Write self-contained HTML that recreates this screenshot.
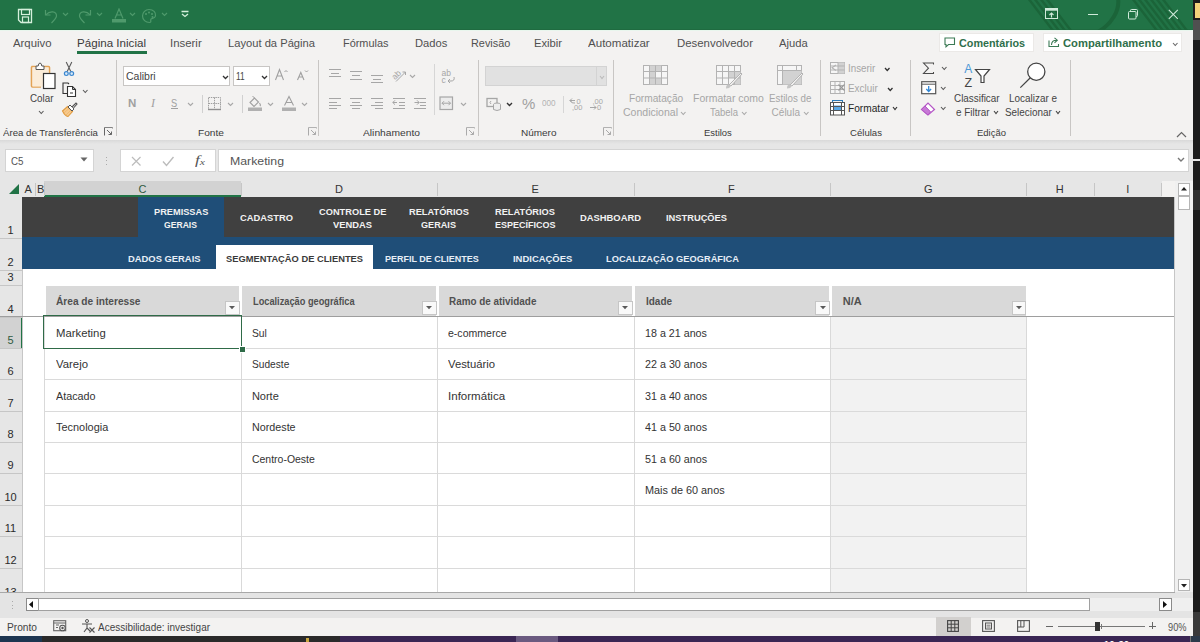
<!DOCTYPE html>
<html><head><meta charset="utf-8"><style>
html,body{margin:0;padding:0;width:1200px;height:642px;overflow:hidden;background:#f3f2f1;font-family:'Liberation Sans', sans-serif;}
</style></head><body>
<div style="position:relative;width:1200px;height:642px;overflow:hidden">
<div style="position:absolute;left:0px;top:0px;width:1200px;height:30px;background:#217346;"></div>
<div style="position:absolute;left:0px;top:30px;width:1193px;height:110px;background:#f3f2f1;"></div>
<div style="position:absolute;left:0px;top:29px;width:1193px;height:1px;background:#1f6b40;"></div>
<div style="position:absolute;left:0px;top:30px;width:1193px;height:1px;background:#e8f6ed;"></div>
<div style="position:absolute;left:77px;top:51.3px;width:70px;height:2.5px;background:#217346;"></div>
<div style="position:absolute;left:938.5px;top:32.5px;width:95.5px;height:19.5px;box-sizing:border-box;border:1px solid #ebe9e7;background:#fff;"></div>
<div style="position:absolute;left:1043px;top:32.5px;width:139px;height:19.5px;box-sizing:border-box;border:1px solid #ebe9e7;background:#fff;"></div>
<div style="position:absolute;left:115.5px;top:60px;width:1px;height:76px;background:#c8c6c4;"></div>
<div style="position:absolute;left:318px;top:60px;width:1px;height:76px;background:#c8c6c4;"></div>
<div style="position:absolute;left:477.5px;top:60px;width:1px;height:76px;background:#c8c6c4;"></div>
<div style="position:absolute;left:613px;top:60px;width:1px;height:76px;background:#c8c6c4;"></div>
<div style="position:absolute;left:820px;top:60px;width:1px;height:76px;background:#c8c6c4;"></div>
<div style="position:absolute;left:910px;top:60px;width:1px;height:76px;background:#c8c6c4;"></div>
<div style="position:absolute;left:1070px;top:60px;width:1px;height:76px;background:#c8c6c4;"></div>
<div style="position:absolute;left:0px;top:140px;width:1193px;height:4px;background:linear-gradient(#d9d9d9,#e6e6e6);"></div>
<div style="position:absolute;left:0px;top:144px;width:1193px;height:37px;background:#e6e6e6;"></div>
<div style="position:absolute;left:4.5px;top:149px;width:89px;height:22.5px;box-sizing:border-box;border:1px solid #d4d4d4;background:#fff;"></div>
<div style="position:absolute;left:120px;top:149px;width:96px;height:22.5px;box-sizing:border-box;border:1px solid #d4d4d4;background:#fff;"></div>
<div style="position:absolute;left:218px;top:149px;width:970.5px;height:22.5px;box-sizing:border-box;border:1px solid #d4d4d4;background:#fff;"></div>
<div style="position:absolute;left:0px;top:181px;width:1162px;height:16px;background:#e6e6e6;"></div>
<div style="position:absolute;left:44px;top:181px;width:197px;height:14.5px;background:#d2d2d2;"></div>
<div style="position:absolute;left:44px;top:195px;width:197px;height:2px;background:#217346;"></div>
<div style="position:absolute;left:35px;top:183px;width:1px;height:13px;background:#c6c6c6;"></div>
<div style="position:absolute;left:44px;top:183px;width:1px;height:13px;background:#c6c6c6;"></div>
<div style="position:absolute;left:241px;top:183px;width:1px;height:13px;background:#c6c6c6;"></div>
<div style="position:absolute;left:437px;top:183px;width:1px;height:13px;background:#c6c6c6;"></div>
<div style="position:absolute;left:634px;top:183px;width:1px;height:13px;background:#c6c6c6;"></div>
<div style="position:absolute;left:830px;top:183px;width:1px;height:13px;background:#c6c6c6;"></div>
<div style="position:absolute;left:1026px;top:183px;width:1px;height:13px;background:#c6c6c6;"></div>
<div style="position:absolute;left:1093.5px;top:183px;width:1px;height:13px;background:#c6c6c6;"></div>
<div style="position:absolute;left:1161px;top:183px;width:1px;height:13px;background:#c6c6c6;"></div>
<svg style="position:absolute;left:8px;top:183px;" width="12" height="12" viewBox="0 0 12 12"><polygon points="11,1 11,11 1,11" fill="#217346"/></svg>
<div style="position:absolute;left:0px;top:197px;width:22px;height:395px;background:#e6e6e6;"></div>
<div style="position:absolute;left:0;top:197px;width:22px;height:394.5px;overflow:hidden">
<div style="position:absolute;left:0px;top:120px;width:22px;height:31px;background:#d2d2d2;"></div>
<div style="position:absolute;left:20.5px;top:120px;width:2px;height:31px;background:#217346;"></div>
<div style="position:absolute;left:0px;top:40.5px;width:22px;height:1px;background:#c6c6c6;"></div>
<div style="position:absolute;left:0;top:26.5px;width:21px;height:13px;line-height:13px;font-size:11px;font-family:Liberation Sans,sans-serif;color:#2a2a2a;text-align:center">1</div>
<div style="position:absolute;left:0px;top:72.5px;width:22px;height:1px;background:#c6c6c6;"></div>
<div style="position:absolute;left:0;top:58.5px;width:21px;height:13px;line-height:13px;font-size:11px;font-family:Liberation Sans,sans-serif;color:#2a2a2a;text-align:center">2</div>
<div style="position:absolute;left:0px;top:88.30000000000001px;width:22px;height:1px;background:#c6c6c6;"></div>
<div style="position:absolute;left:0;top:74.3px;width:21px;height:13px;line-height:13px;font-size:11px;font-family:Liberation Sans,sans-serif;color:#2a2a2a;text-align:center">3</div>
<div style="position:absolute;left:0px;top:119.5px;width:22px;height:1px;background:#c6c6c6;"></div>
<div style="position:absolute;left:0;top:105.5px;width:21px;height:13px;line-height:13px;font-size:11px;font-family:Liberation Sans,sans-serif;color:#2a2a2a;text-align:center">4</div>
<div style="position:absolute;left:0px;top:151px;width:22px;height:1px;background:#c6c6c6;"></div>
<div style="position:absolute;left:0;top:137.0px;width:21px;height:13px;line-height:13px;font-size:11px;font-family:Liberation Sans,sans-serif;color:#2f5a40;text-align:center">5</div>
<div style="position:absolute;left:0px;top:182px;width:22px;height:1px;background:#c6c6c6;"></div>
<div style="position:absolute;left:0;top:168.0px;width:21px;height:13px;line-height:13px;font-size:11px;font-family:Liberation Sans,sans-serif;color:#2a2a2a;text-align:center">6</div>
<div style="position:absolute;left:0px;top:214px;width:22px;height:1px;background:#c6c6c6;"></div>
<div style="position:absolute;left:0;top:200.0px;width:21px;height:13px;line-height:13px;font-size:11px;font-family:Liberation Sans,sans-serif;color:#2a2a2a;text-align:center">7</div>
<div style="position:absolute;left:0px;top:245px;width:22px;height:1px;background:#c6c6c6;"></div>
<div style="position:absolute;left:0;top:231.0px;width:21px;height:13px;line-height:13px;font-size:11px;font-family:Liberation Sans,sans-serif;color:#2a2a2a;text-align:center">8</div>
<div style="position:absolute;left:0px;top:276px;width:22px;height:1px;background:#c6c6c6;"></div>
<div style="position:absolute;left:0;top:262.0px;width:21px;height:13px;line-height:13px;font-size:11px;font-family:Liberation Sans,sans-serif;color:#2a2a2a;text-align:center">9</div>
<div style="position:absolute;left:0px;top:308px;width:22px;height:1px;background:#c6c6c6;"></div>
<div style="position:absolute;left:0;top:294.0px;width:21px;height:13px;line-height:13px;font-size:11px;font-family:Liberation Sans,sans-serif;color:#2a2a2a;text-align:center">10</div>
<div style="position:absolute;left:0px;top:339px;width:22px;height:1px;background:#c6c6c6;"></div>
<div style="position:absolute;left:0;top:325.0px;width:21px;height:13px;line-height:13px;font-size:11px;font-family:Liberation Sans,sans-serif;color:#2a2a2a;text-align:center">11</div>
<div style="position:absolute;left:0px;top:371px;width:22px;height:1px;background:#c6c6c6;"></div>
<div style="position:absolute;left:0;top:357.0px;width:21px;height:13px;line-height:13px;font-size:11px;font-family:Liberation Sans,sans-serif;color:#2a2a2a;text-align:center">12</div>
<div style="position:absolute;left:0px;top:403px;width:22px;height:1px;background:#c6c6c6;"></div>
<div style="position:absolute;left:0;top:389.0px;width:21px;height:13px;line-height:13px;font-size:11px;font-family:Liberation Sans,sans-serif;color:#2a2a2a;text-align:center">13</div>
</div>
<div style="position:absolute;left:22px;top:197px;width:1px;height:395px;background:#c6c6c6;"></div>
<div style="position:absolute;left:23px;top:197px;width:1152px;height:395px;background:#fff;"></div>
<div style="position:absolute;left:22px;top:197px;width:1152px;height:40px;background:#404040;"></div>
<div style="position:absolute;left:137.5px;top:197px;width:86.5px;height:40px;background:#1f4e78;"></div>
<div style="position:absolute;left:22px;top:236.8px;width:1152px;height:32.7px;background:#1f4e78;"></div>
<div style="position:absolute;left:216px;top:245px;width:157px;height:24.5px;background:#fff;"></div>
<div style="position:absolute;left:45.5px;top:286px;width:193.5px;height:29.5px;background:#d9d9d9;"></div>
<div style="position:absolute;left:225px;top:300.5px;width:14.5px;height:14.5px;box-sizing:border-box;border:1px solid #c6c6c6;background:#f9f9f9;"></div>
<svg style="position:absolute;left:229.2px;top:306.3px;" width="7" height="4" viewBox="0 0 7 4"><polygon points="0,0 6,0 3,3.2" fill="#5a5a5a"/></svg>
<div style="position:absolute;left:242px;top:286px;width:194px;height:29.5px;background:#d9d9d9;"></div>
<div style="position:absolute;left:422px;top:300.5px;width:14.5px;height:14.5px;box-sizing:border-box;border:1px solid #c6c6c6;background:#f9f9f9;"></div>
<svg style="position:absolute;left:426.2px;top:306.3px;" width="7" height="4" viewBox="0 0 7 4"><polygon points="0,0 6,0 3,3.2" fill="#5a5a5a"/></svg>
<div style="position:absolute;left:439.3px;top:286px;width:192.7px;height:29.5px;background:#d9d9d9;"></div>
<div style="position:absolute;left:618px;top:300.5px;width:14.5px;height:14.5px;box-sizing:border-box;border:1px solid #c6c6c6;background:#f9f9f9;"></div>
<svg style="position:absolute;left:622.2px;top:306.3px;" width="7" height="4" viewBox="0 0 7 4"><polygon points="0,0 6,0 3,3.2" fill="#5a5a5a"/></svg>
<div style="position:absolute;left:635px;top:286px;width:194.29999999999995px;height:29.5px;background:#d9d9d9;"></div>
<div style="position:absolute;left:815.3px;top:300.5px;width:14.5px;height:14.5px;box-sizing:border-box;border:1px solid #c6c6c6;background:#f9f9f9;"></div>
<svg style="position:absolute;left:819.5px;top:306.3px;" width="7" height="4" viewBox="0 0 7 4"><polygon points="0,0 6,0 3,3.2" fill="#5a5a5a"/></svg>
<div style="position:absolute;left:831.7px;top:286px;width:194.0px;height:29.5px;background:#d9d9d9;"></div>
<div style="position:absolute;left:1011.7px;top:300.5px;width:14.5px;height:14.5px;box-sizing:border-box;border:1px solid #c6c6c6;background:#f9f9f9;"></div>
<svg style="position:absolute;left:1015.9000000000001px;top:306.3px;" width="7" height="4" viewBox="0 0 7 4"><polygon points="0,0 6,0 3,3.2" fill="#5a5a5a"/></svg>
<div style="position:absolute;left:831px;top:317px;width:195.5px;height:275px;background:#f2f2f2;"></div>
<div style="position:absolute;left:0px;top:316px;width:1175px;height:1px;background:#9e9e9e;"></div>
<div style="position:absolute;left:44px;top:348px;width:982px;height:1px;background:#dadada;"></div>
<div style="position:absolute;left:44px;top:379px;width:982px;height:1px;background:#dadada;"></div>
<div style="position:absolute;left:44px;top:411px;width:982px;height:1px;background:#dadada;"></div>
<div style="position:absolute;left:44px;top:442px;width:982px;height:1px;background:#dadada;"></div>
<div style="position:absolute;left:44px;top:473px;width:982px;height:1px;background:#dadada;"></div>
<div style="position:absolute;left:44px;top:505px;width:982px;height:1px;background:#dadada;"></div>
<div style="position:absolute;left:44px;top:536px;width:982px;height:1px;background:#dadada;"></div>
<div style="position:absolute;left:44px;top:568px;width:982px;height:1px;background:#dadada;"></div>
<div style="position:absolute;left:44px;top:600px;width:982px;height:1px;background:#dadada;"></div>
<div style="position:absolute;left:43.5px;top:317px;width:1px;height:275px;background:#d9d9d9;"></div>
<div style="position:absolute;left:240.5px;top:317px;width:1px;height:275px;background:#d9d9d9;"></div>
<div style="position:absolute;left:437px;top:317px;width:1px;height:275px;background:#d9d9d9;"></div>
<div style="position:absolute;left:633.5px;top:317px;width:1px;height:275px;background:#d9d9d9;"></div>
<div style="position:absolute;left:830px;top:317px;width:1px;height:275px;background:#d9d9d9;"></div>
<div style="position:absolute;left:1026px;top:317px;width:1px;height:275px;background:#d9d9d9;"></div>
<div style="position:absolute;left:1174px;top:197px;width:1px;height:395px;background:#c6c6c6;"></div>
<div style="position:absolute;left:43.3px;top:315.3px;width:198.7px;height:33.4px;box-sizing:border-box;border:1.7px solid #2f6b48;background:transparent;"></div>
<div style="position:absolute;left:238.5px;top:345.5px;width:5px;height:5px;background:#2f6b48;border:1px solid #fff;box-sizing:content-box"></div>
<div style="position:absolute;left:1175px;top:181px;width:18px;height:411px;background:#f0f0f0;"></div>
<div style="position:absolute;left:1177.5px;top:182.5px;width:12.5px;height:13px;box-sizing:border-box;border:1px solid #b5b5b5;background:#fff;"></div>
<svg style="position:absolute;left:1180.5px;top:186.5px;" width="7" height="5" viewBox="0 0 7 5"><polygon points="0,3.5 6,3.5 3,0" fill="#222"/></svg>
<div style="position:absolute;left:1177.5px;top:195.5px;width:12.5px;height:14.5px;box-sizing:border-box;border:1px solid #b5b5b5;background:#fff;"></div>
<div style="position:absolute;left:1177.5px;top:579.3px;width:12.5px;height:12px;box-sizing:border-box;border:1px solid #b5b5b5;background:#fff;"></div>
<svg style="position:absolute;left:1180.5px;top:583.5px;" width="7" height="5" viewBox="0 0 7 5"><polygon points="0,0 6,0 3,3.5" fill="#222"/></svg>
<div style="position:absolute;left:0px;top:592px;width:1193px;height:26px;background:#e4e4e4;"></div>
<div style="position:absolute;left:1090px;top:597.5px;width:103px;height:13.5px;background:#efefef;"></div>
<div style="position:absolute;left:0px;top:591.5px;width:1175px;height:1.2px;background:#a8a8a8;"></div>
<div style="position:absolute;left:26px;top:598.3px;width:12.5px;height:12.7px;box-sizing:border-box;border:1px solid #8a8a8a;background:#fff;"></div>
<svg style="position:absolute;left:29px;top:601px;" width="6" height="8" viewBox="0 0 6 8"><polygon points="4,0 4,7 0,3.5" fill="#111"/></svg>
<div style="position:absolute;left:38px;top:598.3px;width:1051.5px;height:12.7px;box-sizing:border-box;border:1px solid #a0a0a0;background:#fff;"></div>
<div style="position:absolute;left:1159px;top:598.3px;width:12.5px;height:12.7px;box-sizing:border-box;border:1px solid #8a8a8a;background:#fff;"></div>
<svg style="position:absolute;left:1163px;top:601px;" width="6" height="8" viewBox="0 0 6 8"><polygon points="0,0 0,7 4,3.5" fill="#111"/></svg>
<div style="position:absolute;left:0px;top:618px;width:1193px;height:18px;background:#f3f2f1;"></div>
<div style="position:absolute;left:936px;top:617px;width:35px;height:19px;background:#d2d0ce;"></div>
<div style="position:absolute;left:0px;top:636px;width:1200px;height:6px;background:#2a2a2a;"></div>
<div style="position:absolute;left:0px;top:636px;width:42px;height:6px;background:#1d3550;"></div>
<div style="position:absolute;left:340px;top:636px;width:850px;height:6px;background:#3a2654;"></div>
<div style="position:absolute;left:516px;top:636px;width:42px;height:6px;background:#6a5a80;"></div>
<div style="position:absolute;left:306px;top:638px;width:3px;height:4px;background:#c9a640;"></div>
<div style="position:absolute;left:1190px;top:636px;width:1px;height:6px;background:#777;"></div>
<div style="position:absolute;left:1191px;top:636px;width:9px;height:6px;background:#2c3a4a;"></div>
<div style="position:absolute;left:1104px;top:640px;font:bold 9px Liberation Sans,sans-serif;color:#fff;letter-spacing:0.5px;line-height:9px">10:30</div>
<div style="position:absolute;left:1193px;top:0px;width:7px;height:636px;background:#1c1c1c;"></div>
<div style="position:absolute;left:1193px;top:612px;width:7px;height:24px;background:#3a3a3a;"></div>
<svg style="position:absolute;left:17px;top:8px;" width="17" height="16" viewBox="0 0 17 16"><path d="M1.5,1.5 H14.5 V14.5 H4 L1.5,12 Z" fill="none" stroke="#d5f0dc" stroke-width="1.3"/><rect x="4.5" y="1.5" width="8" height="5" fill="none" stroke="#d5f0dc" stroke-width="1.2"/><rect x="5.5" y="9" width="6" height="5.5" fill="none" stroke="#d5f0dc" stroke-width="1.2"/></svg>
<svg style="position:absolute;left:43px;top:8px;" width="16" height="16" viewBox="0 0 16 16"><path d="M2.5,2 V7 H7.5" fill="none" stroke="#4f9a6c" stroke-width="1.2"/><path d="M2.8,6.8 C7,2.5 13.5,3 13.5,8 C13.5,10 12,11.5 8.5,15" fill="none" stroke="#4f9a6c" stroke-width="1.2"/></svg>
<svg style="position:absolute;left:62px;top:12px;" width="8" height="5" viewBox="0 0 8 5"><path d="M1,1 L3.5,3.5 L6,1" fill="none" stroke="#4f9a6c" stroke-width="1.1"/></svg>
<svg style="position:absolute;left:77px;top:8px;" width="16" height="16" viewBox="0 0 16 16"><path d="M13.5,2 V7 H8.5" fill="none" stroke="#4f9a6c" stroke-width="1.2"/><path d="M13.2,6.8 C9,2.5 2.5,3 2.5,8 C2.5,10 4,11.5 7.5,15" fill="none" stroke="#4f9a6c" stroke-width="1.2"/></svg>
<svg style="position:absolute;left:96px;top:12px;" width="8" height="5" viewBox="0 0 8 5"><path d="M1,1 L3.5,3.5 L6,1" fill="none" stroke="#4f9a6c" stroke-width="1.1"/></svg>
<svg style="position:absolute;left:111px;top:8px;" width="16" height="16" viewBox="0 0 16 16"><path d="M4,10.5 L8,1 L12,10.5 M5.5,7 H10.5" fill="none" stroke="#4f9a6c" stroke-width="1.2"/><rect x="1" y="11" width="14" height="3.5" fill="#4f9a6c"/></svg>
<svg style="position:absolute;left:129px;top:12px;" width="8" height="5" viewBox="0 0 8 5"><path d="M1,1 L3.5,3.5 L6,1" fill="none" stroke="#4f9a6c" stroke-width="1.1"/></svg>
<svg style="position:absolute;left:141px;top:8px;" width="16" height="16" viewBox="0 0 16 16"><path d="M8,1.5 C12.5,1.5 15,4.5 14.5,8 C14,10.5 11,10 10,11 C9,12.5 11,14.5 8.5,14.5 C4.5,14.5 1.5,11.5 1.5,8 C1.5,4.5 4.5,1.5 8,1.5 Z" fill="none" stroke="#4f9a6c" stroke-width="1.2"/><circle cx="5" cy="6" r="1" fill="#4f9a6c"/><circle cx="8" cy="4.5" r="1" fill="#4f9a6c"/><circle cx="11" cy="6" r="1" fill="#4f9a6c"/><circle cx="11.5" cy="9" r="1" fill="#4f9a6c"/></svg>
<svg style="position:absolute;left:161px;top:12px;" width="8" height="5" viewBox="0 0 8 5"><path d="M1,1 L3.5,3.5 L6,1" fill="none" stroke="#4f9a6c" stroke-width="1.1"/></svg>
<svg style="position:absolute;left:180px;top:10px;" width="10" height="8" viewBox="0 0 10 8"><path d="M1.5,1.5 H8.5 M2,4 L5,6.5 L8,4" fill="none" stroke="#d5f0dc" stroke-width="1.3"/></svg>
<svg style="position:absolute;left:1028px;top:0px;" width="165" height="30" viewBox="0 0 165 30"><g stroke="#1b6439" stroke-width="2.4" fill="none"><path d="M0,-2 L26,32"/><path d="M6,-2 L32,32"/><path d="M12,-2 L38,32"/><path d="M18,-2 L44,32"/><path d="M90,-2 C92,10 84,24 70,32" stroke-width="4"/><path d="M104,-2 L130,32"/><path d="M110,-2 L136,32"/><path d="M116,-2 L142,32"/><path d="M122,-2 L148,32"/><path d="M128,-2 L154,32"/><path d="M134,-2 L160,32"/></g></svg>
<svg style="position:absolute;left:1045px;top:8px;" width="14" height="12" viewBox="0 0 14 12"><rect x="0.5" y="0.5" width="12" height="10" fill="none" stroke="#d0eada" stroke-width="1"/><rect x="0.5" y="0.5" width="12" height="2.2" fill="#d0eada"/><path d="M6.5,9.5 V5 M4.5,7 L6.5,5 L8.5,7" fill="none" stroke="#d0eada" stroke-width="1.1"/></svg>
<div style="position:absolute;left:1088px;top:13.5px;width:9.5px;height:1px;background:#d0eada;"></div>
<svg style="position:absolute;left:1127.5px;top:8.5px;" width="11" height="11" viewBox="0 0 11 11"><rect x="0.5" y="2.5" width="7.5" height="7.5" rx="1" fill="none" stroke="#d0eada" stroke-width="1"/><path d="M2.5,2.5 V1.5 Q2.5,0.5 3.5,0.5 H8.5 Q9.5,0.5 9.5,1.5 V6.5 Q9.5,7.5 8.5,7.5 H8" fill="none" stroke="#d0eada" stroke-width="1"/></svg>
<svg style="position:absolute;left:1167.5px;top:8.5px;" width="11" height="11" viewBox="0 0 11 11"><path d="M0.8,0.8 L9.8,9.8 M9.8,0.8 L0.8,9.8" stroke="#d0eada" stroke-width="1.1"/></svg>
<div style="position:absolute;left:1195px;top:3px;width:5px;height:14.5px;background:#f3d27a;"></div>
<div style="position:absolute;left:1193px;top:20px;width:7px;height:20px;background:#505050;"></div>
<div style="position:absolute;left:1193px;top:159px;width:7px;height:2px;background:#e8e8e8;"></div>
<div style="position:absolute;left:1193px;top:190px;width:7px;height:20px;background:#2e2e2e;"></div>
<svg style="position:absolute;left:30px;top:62px;" width="27" height="28" viewBox="0 0 27 28"><path d="M1.5,4.5 H6 M14,4.5 H18.5 Q19.5,4.5 19.5,5.5 V11 M11,25 H2.5 Q1.5,25 1.5,24 V5.5 Q1.5,4.5 2.5,4.5" fill="#fbe9d0" stroke="#e3a254" stroke-width="1.6"/><rect x="2.5" y="5.5" width="16" height="19" fill="#fbecd8"/><path d="M6,7.5 V4 H8.2 Q8.5,1 10,1 Q11.5,1 11.8,4 H14 V7.5 Z" fill="#fff" stroke="#555" stroke-width="1"/><rect x="13.5" y="11.5" width="11.5" height="15" fill="#fff" stroke="#333" stroke-width="1.2"/></svg>
<svg style="position:absolute;left:37.5px;top:109.5px;" width="6.5" height="5" viewBox="0 0 6.5 5"><path d="M1,1 L3.25,3.5 L5.5,1" fill="none" stroke="#595959" stroke-width="1.1"/></svg>
<svg style="position:absolute;left:63px;top:61px;" width="12" height="16" viewBox="0 0 12 16"><path d="M3.2,1 L7.8,10.5 M8.8,1 L4.2,10.5" stroke="#5a5a5a" stroke-width="1.1"/><circle cx="3.3" cy="12.6" r="1.9" fill="#d6e8f7" stroke="#3a87d0" stroke-width="1.2"/><circle cx="8.7" cy="12.6" r="1.9" fill="#d6e8f7" stroke="#3a87d0" stroke-width="1.2"/></svg>
<svg style="position:absolute;left:62px;top:82px;" width="16" height="16" viewBox="0 0 16 16"><path d="M5,11.5 H1 V1 H6 L7,2" fill="none" stroke="#333" stroke-width="1.1"/><path d="M5.5,4.5 H10.5 L13.5,7.5 V14.5 H5.5 Z" fill="#fff" stroke="#333" stroke-width="1.1"/><path d="M10.5,4.5 V7.5 H13.5" fill="none" stroke="#333" stroke-width="1"/><rect x="8" y="10" width="3" height="2" fill="#999"/></svg>
<svg style="position:absolute;left:81.5px;top:88.5px;" width="6.5" height="5" viewBox="0 0 6.5 5"><path d="M1,1 L3.25,3.5 L5.5,1" fill="none" stroke="#595959" stroke-width="1.1"/></svg>
<svg style="position:absolute;left:61px;top:102px;" width="17" height="16" viewBox="0 0 17 16"><path d="M1.5,9 L6.5,4.5 L11.5,9.5 L7,14.5 Q4,14 1.5,9 Z" fill="#f6c98c" stroke="#e09a3e" stroke-width="1.1"/><path d="M3,11 L8,6.5 M5,13 L9.5,8.5" stroke="#f0b56a" stroke-width="0.8"/><path d="M7,5 L9,3 L13,7 L11,9 Z" fill="#fff" stroke="#555" stroke-width="1"/><path d="M11,5 L15,1 L16,2 L12.5,6" fill="#fff" stroke="#555" stroke-width="1.1"/></svg>
<svg style="position:absolute;left:104px;top:127px;" width="10" height="10" viewBox="0 0 10 10"><path d="M0.5,0.5 H8.5 V8.5 H0.5 Z" fill="none" stroke="#777" stroke-width="0.9" stroke-dasharray="9 100"/><path d="M0.5,0.5 V8.5 M3,3 L7.5,7.5 M7.5,4.5 V7.5 H4.5" fill="none" stroke="#666" stroke-width="1"/></svg>
<div style="position:absolute;left:123.3px;top:66.2px;width:107px;height:20px;box-sizing:border-box;border:1px solid #c8c6c4;background:#fff;"></div>
<svg style="position:absolute;left:221.5px;top:74.5px;" width="7" height="5" viewBox="0 0 7 5"><path d="M1,1 L3.5,3.5 L6,1" fill="none" stroke="#333" stroke-width="1.3"/></svg>
<div style="position:absolute;left:232.5px;top:66.2px;width:37px;height:20px;box-sizing:border-box;border:1px solid #c8c6c4;background:#fff;"></div>
<svg style="position:absolute;left:261px;top:74.5px;" width="7" height="5" viewBox="0 0 7 5"><path d="M1,1 L3.5,3.5 L6,1" fill="none" stroke="#333" stroke-width="1.3"/></svg>
<svg style="position:absolute;left:274px;top:68px;" width="16" height="14" viewBox="0 0 16 14"><path d="M1.5,12 L5.5,1.5 L9.5,12 M3,8 H8" fill="none" stroke="#a0a0a0" stroke-width="1.1"/><path d="M10.5,4 L12,2.5 L13.5,4" fill="none" stroke="#a0a0a0" stroke-width="1"/></svg>
<svg style="position:absolute;left:296px;top:68px;" width="14" height="14" viewBox="0 0 14 14"><path d="M1.5,12 L4.8,4.5 L8,12 M2.8,9 H6.8" fill="none" stroke="#a0a0a0" stroke-width="1.1"/><path d="M9,2.5 L10.5,4 L12,2.5" fill="none" stroke="#a0a0a0" stroke-width="1"/></svg>
<div style="position:absolute;left:170.8px;top:108px;width:7.5px;height:1px;background:#a0a0a0;"></div>
<svg style="position:absolute;left:186.8px;top:101.8px;" width="7" height="5" viewBox="0 0 7 5"><path d="M1,1 L3.5,3.5 L6,1" fill="none" stroke="#a8a8a8" stroke-width="1.1"/></svg>
<div style="position:absolute;left:201.7px;top:95px;width:1px;height:18px;background:#d0d0d0;"></div>
<svg style="position:absolute;left:207px;top:96px;" width="15" height="15" viewBox="0 0 15 15"><path d="M1.5,1.5 H13.5 V13.5 H1.5 Z M7.5,1.5 V13.5 M1.5,7.5 H13.5" fill="none" stroke="#a0a0a0" stroke-width="1" stroke-dasharray="1.5 0.8"/><path d="M1,13.5 H14" stroke="#909090" stroke-width="1.4"/></svg>
<svg style="position:absolute;left:226.8px;top:101.8px;" width="7" height="5" viewBox="0 0 7 5"><path d="M1,1 L3.5,3.5 L6,1" fill="none" stroke="#a8a8a8" stroke-width="1.1"/></svg>
<div style="position:absolute;left:241.7px;top:95px;width:1px;height:18px;background:#d0d0d0;"></div>
<svg style="position:absolute;left:247px;top:95px;" width="16" height="17" viewBox="0 0 16 17"><path d="M3,7.5 L7.5,3 L11.5,7 L7,11.5 Z" fill="none" stroke="#a0a0a0" stroke-width="1.1"/><path d="M7.5,3 L5.5,1" stroke="#a0a0a0" stroke-width="1"/><path d="M12.5,8 Q14,10 13,11" stroke="#a0a0a0" stroke-width="1.2" fill="none"/><rect x="1" y="12.5" width="14" height="3.5" fill="#b0b0b0"/></svg>
<svg style="position:absolute;left:266.8px;top:101.8px;" width="7" height="5" viewBox="0 0 7 5"><path d="M1,1 L3.5,3.5 L6,1" fill="none" stroke="#a8a8a8" stroke-width="1.1"/></svg>
<svg style="position:absolute;left:281px;top:95px;" width="16" height="17" viewBox="0 0 16 17"><path d="M3.5,10.5 L8,1.5 L12.5,10.5 M5,7.5 H11" fill="none" stroke="#a0a0a0" stroke-width="1.1"/><rect x="1" y="12.5" width="14" height="3.5" fill="#b0b0b0"/></svg>
<svg style="position:absolute;left:301px;top:101.8px;" width="7" height="5" viewBox="0 0 7 5"><path d="M1,1 L3.5,3.5 L6,1" fill="none" stroke="#a8a8a8" stroke-width="1.1"/></svg>
<svg style="position:absolute;left:308px;top:127px;" width="10" height="10" viewBox="0 0 10 10"><path d="M0.5,0.5 H8.5 V8.5 H0.5 Z" fill="none" stroke="#aaa" stroke-width="0.9" stroke-dasharray="9 100"/><path d="M0.5,0.5 V8.5 M3,3 L7.5,7.5 M7.5,4.5 V7.5 H4.5" fill="none" stroke="#aaa" stroke-width="1"/></svg>
<div style="position:absolute;left:329px;top:69px;width:12.3px;height:1.1px;background:#a6a6a6;"></div>
<div style="position:absolute;left:331px;top:72.6px;width:8px;height:1.1px;background:#a6a6a6;"></div>
<div style="position:absolute;left:329px;top:76px;width:12.3px;height:1.1px;background:#a6a6a6;"></div>
<div style="position:absolute;left:350px;top:71.3px;width:12.3px;height:1.1px;background:#a6a6a6;"></div>
<div style="position:absolute;left:352px;top:75px;width:8px;height:1.1px;background:#a6a6a6;"></div>
<div style="position:absolute;left:350px;top:78.6px;width:12.3px;height:1.1px;background:#a6a6a6;"></div>
<div style="position:absolute;left:371px;top:75px;width:12.3px;height:1.1px;background:#a6a6a6;"></div>
<div style="position:absolute;left:373px;top:78.5px;width:8px;height:1.1px;background:#a6a6a6;"></div>
<div style="position:absolute;left:371px;top:82px;width:12.3px;height:1.1px;background:#a6a6a6;"></div>
<svg style="position:absolute;left:391px;top:67px;" width="17" height="16" viewBox="0 0 17 16"><text x="0" y="10" font-family="Liberation Sans" font-size="8.5" fill="#a6a6a6" transform="rotate(-45 6 7)">ab</text><path d="M5,14.5 L14.5,5 M11.5,5 H14.5 V8" fill="none" stroke="#a6a6a6" stroke-width="1"/></svg>
<svg style="position:absolute;left:409.3px;top:74px;" width="7" height="5" viewBox="0 0 7 5"><path d="M1,1 L3.5,3.5 L6,1" fill="none" stroke="#a8a8a8" stroke-width="1.1"/></svg>
<div style="position:absolute;left:329px;top:98.2px;width:12.3px;height:1.1px;background:#a6a6a6;"></div>
<div style="position:absolute;left:329px;top:101.6px;width:8px;height:1.1px;background:#a6a6a6;"></div>
<div style="position:absolute;left:329px;top:105px;width:12.3px;height:1.1px;background:#a6a6a6;"></div>
<div style="position:absolute;left:329px;top:108.4px;width:8px;height:1.1px;background:#a6a6a6;"></div>
<div style="position:absolute;left:350px;top:98.2px;width:12.3px;height:1.1px;background:#a6a6a6;"></div>
<div style="position:absolute;left:352px;top:101.6px;width:8px;height:1.1px;background:#a6a6a6;"></div>
<div style="position:absolute;left:350px;top:105px;width:12.3px;height:1.1px;background:#a6a6a6;"></div>
<div style="position:absolute;left:352px;top:108.4px;width:8px;height:1.1px;background:#a6a6a6;"></div>
<div style="position:absolute;left:371px;top:98.2px;width:12.3px;height:1.1px;background:#a6a6a6;"></div>
<div style="position:absolute;left:375.3px;top:101.6px;width:8.0px;height:1.1px;background:#a6a6a6;"></div>
<div style="position:absolute;left:371px;top:105px;width:12.3px;height:1.1px;background:#a6a6a6;"></div>
<div style="position:absolute;left:375.3px;top:108.4px;width:8.0px;height:1.1px;background:#a6a6a6;"></div>
<div style="position:absolute;left:393px;top:98.2px;width:12px;height:1.1px;background:#a6a6a6;"></div>
<div style="position:absolute;left:399px;top:105px;width:6px;height:1.1px;background:#a6a6a6;"></div>
<div style="position:absolute;left:393px;top:108.4px;width:12px;height:1.1px;background:#a6a6a6;"></div>
<div style="position:absolute;left:399px;top:101.6px;width:6px;height:1.1px;background:#a6a6a6;"></div>
<svg style="position:absolute;left:392px;top:99px;" width="6" height="7" viewBox="0 0 6 7"><path d="M5,3.5 H0.8 M3,1.3 L0.8,3.5 L3,5.7" fill="none" stroke="#a6a6a6" stroke-width="1"/></svg>
<div style="position:absolute;left:414px;top:98.2px;width:12.3px;height:1.1px;background:#a6a6a6;"></div>
<div style="position:absolute;left:420px;top:101.6px;width:6.300000000000001px;height:1.1px;background:#a6a6a6;"></div>
<div style="position:absolute;left:420px;top:105px;width:6.300000000000001px;height:1.1px;background:#a6a6a6;"></div>
<div style="position:absolute;left:414px;top:108.4px;width:12.3px;height:1.1px;background:#a6a6a6;"></div>
<svg style="position:absolute;left:414px;top:99px;" width="6" height="7" viewBox="0 0 6 7"><path d="M0.5,3.5 H5 M3,1.3 L5.2,3.5 L3,5.7" fill="none" stroke="#a6a6a6" stroke-width="1"/></svg>
<div style="position:absolute;left:433.6px;top:64px;width:1px;height:51px;background:#d6d6d6;"></div>
<svg style="position:absolute;left:441px;top:68px;" width="15" height="16" viewBox="0 0 15 16"><text x="0.5" y="7.5" font-family="Liberation Sans" font-size="8.5" fill="#a6a6a6">ab</text><text x="0.5" y="14.5" font-family="Liberation Sans" font-size="8.5" fill="#a6a6a6">c</text><path d="M13,9 Q14,13 10,13 H7 M9,11 L7,13 L9,15" fill="none" stroke="#a6a6a6" stroke-width="1"/></svg>
<svg style="position:absolute;left:439px;top:96px;" width="15" height="15" viewBox="0 0 15 15"><rect x="1" y="1" width="12.5" height="12.5" fill="#ececec" stroke="#a6a6a6" stroke-width="1.2"/><path d="M3,7.2 H11.5 M5,5.2 L3,7.2 L5,9.2 M9.5,5.2 L11.5,7.2 L9.5,9.2" fill="none" stroke="#a6a6a6" stroke-width="1"/></svg>
<svg style="position:absolute;left:459.5px;top:102px;" width="7" height="5" viewBox="0 0 7 5"><path d="M1,1 L3.5,3.5 L6,1" fill="none" stroke="#a8a8a8" stroke-width="1.1"/></svg>
<svg style="position:absolute;left:466px;top:127px;" width="10" height="10" viewBox="0 0 10 10"><path d="M0.5,0.5 H8.5 V8.5 H0.5 Z" fill="none" stroke="#aaa" stroke-width="0.9" stroke-dasharray="9 100"/><path d="M0.5,0.5 V8.5 M3,3 L7.5,7.5 M7.5,4.5 V7.5 H4.5" fill="none" stroke="#aaa" stroke-width="1"/></svg>
<div style="position:absolute;left:485px;top:66px;width:122px;height:20.3px;box-sizing:border-box;border:1px solid #d3d3d3;background:#e1e1e1;"></div>
<div style="position:absolute;left:596px;top:67px;width:1px;height:18.3px;background:#d3d3d3;"></div>
<svg style="position:absolute;left:598.5px;top:74.5px;" width="6" height="5" viewBox="0 0 6 5"><path d="M1,1 L3.0,3.5 L5,1" fill="none" stroke="#bbb" stroke-width="1.1"/></svg>
<svg style="position:absolute;left:486px;top:97px;" width="17" height="15" viewBox="0 0 17 15"><rect x="1" y="1.5" width="10" height="8" fill="none" stroke="#a6a6a6" stroke-width="1.3"/><path d="M5,4 Q3,5.5 5,7" stroke="#a6a6a6" fill="none"/><ellipse cx="11" cy="7.5" rx="3.5" ry="1.5" fill="#eee" stroke="#a6a6a6"/><path d="M7.5,7.5 V12.5 Q11,14.5 14.5,12.5 V7.5" fill="#eee" stroke="#a6a6a6"/></svg>
<svg style="position:absolute;left:506.3px;top:102px;" width="7" height="5" viewBox="0 0 7 5"><path d="M1,1 L3.5,3.5 L6,1" fill="none" stroke="#333" stroke-width="1.4"/></svg>
<div style="position:absolute;left:562.8px;top:96px;width:1px;height:17px;background:#d6d6d6;"></div>
<svg style="position:absolute;left:569px;top:97px;" width="15" height="14" viewBox="0 0 15 14"><path d="M6,3.5 H1 M3,1.5 L1,3.5 L3,5.5 M1,3.5 Q3,7 6,6" fill="none" stroke="#a6a6a6" stroke-width="1"/><text x="7.5" y="7" font-family="Liberation Sans" font-size="7.5" fill="#a6a6a6">0</text><text x="3" y="13" font-family="Liberation Sans" font-size="7.5" fill="#a6a6a6">,00</text></svg>
<svg style="position:absolute;left:589px;top:97px;" width="15" height="14" viewBox="0 0 15 14"><text x="3.5" y="6.5" font-family="Liberation Sans" font-size="7.5" fill="#a6a6a6">,00</text><path d="M1,10.5 H7 M5,8.5 L7,10.5 L5,12.5" fill="none" stroke="#a6a6a6" stroke-width="1"/><text x="8" y="13" font-family="Liberation Sans" font-size="7.5" fill="#a6a6a6">0</text></svg>
<svg style="position:absolute;left:603px;top:127px;" width="10" height="10" viewBox="0 0 10 10"><path d="M0.5,0.5 H8.5 V8.5 H0.5 Z" fill="none" stroke="#aaa" stroke-width="0.9" stroke-dasharray="9 100"/><path d="M0.5,0.5 V8.5 M3,3 L7.5,7.5 M7.5,4.5 V7.5 H4.5" fill="none" stroke="#aaa" stroke-width="1"/></svg>
<svg style="position:absolute;left:643px;top:65px;" width="26" height="21" viewBox="0 0 26 21"><rect x="0.5" y="0.5" width="24" height="19" fill="#f6f6f6" stroke="#b3b3b3"/><rect x="6.5" y="0.5" width="12" height="6" fill="#d2d2d2"/><rect x="6.5" y="6.5" width="6" height="6.5" fill="#d2d2d2"/><rect x="6.5" y="13" width="12" height="6.5" fill="#d2d2d2"/><path d="M6.5,0.5 V19.5 M12.5,0.5 V19.5 M18.5,0.5 V19.5 M0.5,6.5 H24.5 M0.5,13 H24.5" stroke="#b3b3b3" fill="none"/></svg>
<svg style="position:absolute;left:716px;top:65px;" width="27" height="24" viewBox="0 0 27 24"><rect x="0.5" y="0.5" width="24" height="19" fill="#f6f6f6" stroke="#b3b3b3"/><rect x="12.5" y="6.5" width="12" height="6.5" fill="#d2d2d2"/><rect x="18.5" y="13" width="6" height="6.5" fill="#d2d2d2"/><path d="M6.5,0.5 V19.5 M12.5,0.5 V19.5 M18.5,0.5 V19.5 M0.5,6.5 H24.5 M0.5,13 H24.5" stroke="#b3b3b3" fill="none"/><path d="M13,20 L25,8 L26,9 L15,21 Z" fill="#f3f2f1" stroke="#b3b3b3"/><path d="M10,23.5 Q10,19 13,19.5 L14.5,21 Q14,23.5 10,23.5 Z" fill="#c4c4c4"/></svg>
<svg style="position:absolute;left:777px;top:65px;" width="28" height="24" viewBox="0 0 28 24"><rect x="0.5" y="0.5" width="24" height="19" fill="#f6f6f6" stroke="#b3b3b3"/><rect x="5.5" y="5.5" width="19" height="14" fill="#d2d2d2"/><path d="M5.5,0.5 V19.5 M19.5,0.5 V5.5 M0.5,5.5 H24.5" stroke="#b3b3b3" fill="none"/><path d="M13,20 L25,8 L26,9 L15,21 Z" fill="#f3f2f1" stroke="#b3b3b3"/><path d="M10,23.5 Q10,19 13,19.5 L14.5,21 Q14,23.5 10,23.5 Z" fill="#c4c4c4"/></svg>
<svg style="position:absolute;left:680px;top:110.5px;" width="6.5" height="5" viewBox="0 0 6.5 5"><path d="M1,1 L3.25,3.5 L5.5,1" fill="none" stroke="#a6a6a6" stroke-width="1.1"/></svg>
<svg style="position:absolute;left:741px;top:110.5px;" width="6.5" height="5" viewBox="0 0 6.5 5"><path d="M1,1 L3.25,3.5 L5.5,1" fill="none" stroke="#a6a6a6" stroke-width="1.1"/></svg>
<svg style="position:absolute;left:803px;top:110.5px;" width="6.5" height="5" viewBox="0 0 6.5 5"><path d="M1,1 L3.25,3.5 L5.5,1" fill="none" stroke="#a6a6a6" stroke-width="1.1"/></svg>
<svg style="position:absolute;left:830px;top:62px;" width="16" height="13" viewBox="0 0 16 13"><rect x="0.5" y="0.5" width="14" height="11" fill="#f6f6f6" stroke="#b3b3b3"/><rect x="8" y="0.5" width="6.5" height="11" fill="#d2d2d2"/><path d="M0.5,4 H14.5 M0.5,8 H14.5 M8,0.5 V11.5" stroke="#b3b3b3"/><path d="M6,3 L2,5.8 L6,8.5" fill="none" stroke="#b3b3b3" stroke-width="1.1"/></svg>
<svg style="position:absolute;left:884.3px;top:66.5px;" width="6.5" height="5" viewBox="0 0 6.5 5"><path d="M1,1 L3.25,3.5 L5.5,1" fill="none" stroke="#333" stroke-width="1.3"/></svg>
<svg style="position:absolute;left:830px;top:81px;" width="16" height="14" viewBox="0 0 16 14"><rect x="0.5" y="0.5" width="14" height="12" fill="#f6f6f6" stroke="#b3b3b3"/><path d="M0.5,4.5 H14.5 M0.5,8.5 H14.5 M5,0.5 V12.5 M10,0.5 V12.5" stroke="#b3b3b3"/><path d="M8.5,3.5 L14.5,9.5 M14.5,3.5 L8.5,9.5" stroke="#999" stroke-width="1.1"/></svg>
<svg style="position:absolute;left:887px;top:86.5px;" width="6.5" height="5" viewBox="0 0 6.5 5"><path d="M1,1 L3.25,3.5 L5.5,1" fill="none" stroke="#333" stroke-width="1.3"/></svg>
<svg style="position:absolute;left:830px;top:100px;" width="16" height="16" viewBox="0 0 16 16"><rect x="0.5" y="2.5" width="14" height="12.5" fill="#fff" stroke="#555"/><rect x="3.5" y="5.5" width="8" height="5" fill="#5aa9e8"/><path d="M0.5,6.5 H14.5 M0.5,10.5 H14.5 M3.5,2.5 V15 M11.5,2.5 V15" stroke="#555" stroke-width="1"/><path d="M2.5,0.5 H12.5 M2.5,0 V2 M12.5,0 V2" stroke="#2d7ab8" stroke-width="1"/></svg>
<svg style="position:absolute;left:892.3px;top:106px;" width="6" height="5" viewBox="0 0 6 5"><path d="M1,1 L3.0,3.5 L5,1" fill="none" stroke="#333" stroke-width="1.2"/></svg>
<svg style="position:absolute;left:922px;top:62px;" width="13" height="13" viewBox="0 0 13 13"><path d="M11.5,2.5 V1 H1.5 L6.5,6.2 L1.5,11.5 H11.5 V10" fill="none" stroke="#4a4a4a" stroke-width="1.05"/></svg>
<svg style="position:absolute;left:940.5px;top:66px;" width="6.5" height="5" viewBox="0 0 6.5 5"><path d="M1,1 L3.25,3.5 L5.5,1" fill="none" stroke="#555" stroke-width="1.1"/></svg>
<svg style="position:absolute;left:921px;top:81px;" width="16" height="14" viewBox="0 0 16 14"><rect x="0.7" y="0.7" width="14" height="12" fill="#fff" stroke="#555" stroke-width="1.2"/><path d="M0.7,3.2 H14.7" stroke="#555" stroke-width="1"/><path d="M7.7,5 V10.5 M5.3,8 L7.7,10.5 L10.1,8" fill="none" stroke="#2e86d6" stroke-width="1.3"/></svg>
<svg style="position:absolute;left:939.5px;top:86px;" width="6.5" height="5" viewBox="0 0 6.5 5"><path d="M1,1 L3.25,3.5 L5.5,1" fill="none" stroke="#555" stroke-width="1.1"/></svg>
<svg style="position:absolute;left:920px;top:101px;" width="16" height="15" viewBox="0 0 16 15"><path d="M1.5,8.5 L8,2 L14.5,8.5 L8,14 Z" fill="#fff" stroke="#b455c6" stroke-width="1.2"/><path d="M1.5,8.5 L5,5 L10.5,10.8 L8,14 Z" fill="#c77ad6" stroke="#b455c6" stroke-width="1"/></svg>
<svg style="position:absolute;left:939.5px;top:106px;" width="6.5" height="5" viewBox="0 0 6.5 5"><path d="M1,1 L3.25,3.5 L5.5,1" fill="none" stroke="#555" stroke-width="1.1"/></svg>
<svg style="position:absolute;left:963px;top:62px;" width="29" height="26" viewBox="0 0 29 26"><text x="1.3" y="10.5" font-family="Liberation Sans" font-size="12" fill="#4a98d6">A</text><text x="1.5" y="24.5" font-family="Liberation Sans" font-size="12.5" fill="#444">Z</text><path d="M12.5,7.5 H26.5 L21,14 V20.5 H18 V14 Z" fill="#fff" stroke="#444" stroke-width="1.2"/></svg>
<svg style="position:absolute;left:992.5px;top:110.3px;" width="6" height="5" viewBox="0 0 6 5"><path d="M1,1 L3.0,3.5 L5,1" fill="none" stroke="#444" stroke-width="1.1"/></svg>
<svg style="position:absolute;left:1018px;top:61px;" width="30" height="29" viewBox="0 0 30 29"><circle cx="18.3" cy="10.7" r="8.6" fill="#fff" stroke="#444" stroke-width="1.3"/><path d="M12.3,16.8 L2.3,26.6" stroke="#444" stroke-width="1.3"/></svg>
<svg style="position:absolute;left:1055px;top:110.3px;" width="6" height="5" viewBox="0 0 6 5"><path d="M1,1 L3.0,3.5 L5,1" fill="none" stroke="#444" stroke-width="1.1"/></svg>
<svg style="position:absolute;left:1175.5px;top:131px;" width="12" height="8" viewBox="0 0 12 8"><path d="M1,6 L5.5,1.5 L10,6" fill="none" stroke="#666" stroke-width="1.2"/></svg>
<svg style="position:absolute;left:944px;top:37px;" width="12" height="11" viewBox="0 0 12 11"><path d="M1,1 H10.5 V7.5 H4.5 L2,9.8 V7.5 H1 Z" fill="none" stroke="#3b7a55" stroke-width="1.1"/></svg>
<svg style="position:absolute;left:1048px;top:36px;" width="13" height="12" viewBox="0 0 13 12"><path d="M1,4.5 V10.5 H10.5 V8" fill="none" stroke="#3b7a55" stroke-width="1.1"/><path d="M3.5,9 Q3.5,4.2 8.5,4.2 M6.5,1.8 L9.3,4.2 L6.5,6.8" fill="none" stroke="#3b7a55" stroke-width="1.1"/></svg>
<svg style="position:absolute;left:1171.5px;top:41.5px;" width="6.5" height="5" viewBox="0 0 6.5 5"><path d="M1,1 L3.25,3.5 L5.5,1" fill="none" stroke="#666" stroke-width="1.1"/></svg>
<svg style="position:absolute;left:80px;top:157px;" width="9" height="6" viewBox="0 0 9 6"><polygon points="0.5,0.5 7.5,0.5 4,4.5" fill="#666"/></svg>
<div style="position:absolute;left:105.8px;top:156.5px;width:1.4px;height:1.4px;background:#aaa;"></div>
<div style="position:absolute;left:105.8px;top:160px;width:1.4px;height:1.4px;background:#aaa;"></div>
<div style="position:absolute;left:105.8px;top:163.5px;width:1.4px;height:1.4px;background:#aaa;"></div>
<svg style="position:absolute;left:131px;top:155.5px;" width="11" height="11" viewBox="0 0 11 11"><path d="M1,1 L9.5,9.5 M9.5,1 L1,9.5" stroke="#bcbcbc" stroke-width="1.2"/></svg>
<svg style="position:absolute;left:162px;top:155.5px;" width="13" height="11" viewBox="0 0 13 11"><path d="M1,5.5 L4.5,9.5 L11.5,1" fill="none" stroke="#bcbcbc" stroke-width="1.4"/></svg>
<svg style="position:absolute;left:1177px;top:157px;" width="9" height="6" viewBox="0 0 9 6"><path d="M1,1 L4,4 L7,1" fill="none" stroke="#777" stroke-width="1.4"/></svg>
<div style="position:absolute;left:11.5px;top:601px;width:1.2px;height:1.2px;background:#aaa;"></div>
<div style="position:absolute;left:11.5px;top:604.5px;width:1.2px;height:1.2px;background:#aaa;"></div>
<div style="position:absolute;left:11.5px;top:608px;width:1.2px;height:1.2px;background:#aaa;"></div>
<svg style="position:absolute;left:53px;top:620px;" width="15" height="13" viewBox="0 0 15 13"><rect x="0.7" y="0.7" width="12" height="10" fill="none" stroke="#666" stroke-width="1.1"/><path d="M0.7,3 H12.7" stroke="#666"/><path d="M3,5 H6 M3,7.5 H5" stroke="#666"/><circle cx="9.5" cy="8" r="2.8" fill="#f3f2f1" stroke="#555" stroke-width="1.1"/><circle cx="9.5" cy="8" r="1.2" fill="#555"/></svg>
<svg style="position:absolute;left:81px;top:619px;" width="15" height="14" viewBox="0 0 15 14"><circle cx="6" cy="2" r="1.5" fill="none" stroke="#555"/><path d="M1,5 H11 M6,5 V9 L3,13 M6,9 L9,12" fill="none" stroke="#555" stroke-width="1.1"/><path d="M8.5,8.5 L13.5,13.5 M13.5,8.5 L8.5,13.5" stroke="#555" stroke-width="1.1"/></svg>
<svg style="position:absolute;left:947px;top:619.5px;" width="12" height="12" viewBox="0 0 12 12"><rect x="0.6" y="0.6" width="10.8" height="10.8" fill="none" stroke="#444" stroke-width="1.1"/><path d="M0.6,4.2 H11.4 M0.6,7.8 H11.4 M4.2,0.6 V11.4 M7.8,0.6 V11.4" stroke="#444" stroke-width="1"/></svg>
<svg style="position:absolute;left:982px;top:619.5px;" width="13" height="12" viewBox="0 0 13 12"><rect x="0.6" y="0.6" width="11.8" height="10.8" fill="none" stroke="#555" stroke-width="1.1"/><rect x="3.5" y="3" width="6" height="6" fill="none" stroke="#555"/><path d="M4.5,5.2 H8.5 M4.5,7 H8.5" stroke="#555" stroke-width="0.8"/></svg>
<svg style="position:absolute;left:1017px;top:619.5px;" width="13" height="12" viewBox="0 0 13 12"><rect x="0.6" y="0.6" width="11.8" height="10.8" fill="none" stroke="#555" stroke-width="1.1"/><path d="M0.6,7 H7 V0.6 M3.8,0.6 V7" fill="none" stroke="#555" stroke-width="1"/></svg>
<div style="position:absolute;left:1046px;top:625.5px;width:6.5px;height:1.1px;background:#666;"></div>
<div style="position:absolute;left:1057.7px;top:626px;width:87.3px;height:1px;background:#777;"></div>
<div style="position:absolute;left:1095px;top:621.5px;width:4.7px;height:9.5px;background:#333;"></div>
<div style="position:absolute;left:1101px;top:623.5px;width:1px;height:5px;background:#777;"></div>
<div style="position:absolute;left:1149.3px;top:625.5px;width:6.5px;height:1.1px;background:#666;"></div>
<div style="position:absolute;left:1152px;top:622.3px;width:1.1px;height:7px;background:#666;"></div>
<span id="t0" style="position:absolute;left:12.5px;top:36.8px;height:13.8px;line-height:13.8px;font-size:10.6px;font-weight:400;color:#505050;font-family:'Liberation Sans', sans-serif;white-space:nowrap;transform:scaleX(1.0718);transform-origin:0 50%;">Arquivo</span>
<span id="t1" style="position:absolute;left:77px;top:36.8px;height:13.8px;line-height:13.8px;font-size:10.6px;font-weight:400;color:#3a3a3a;font-family:'Liberation Sans', sans-serif;white-space:nowrap;transform:scaleX(1.0950);transform-origin:0 50%;">Página Inicial</span>
<span id="t2" style="position:absolute;left:170px;top:36.8px;height:13.8px;line-height:13.8px;font-size:10.6px;font-weight:400;color:#505050;font-family:'Liberation Sans', sans-serif;white-space:nowrap;transform:scaleX(1.0769);transform-origin:0 50%;">Inserir</span>
<span id="t3" style="position:absolute;left:228px;top:36.8px;height:13.8px;line-height:13.8px;font-size:10.6px;font-weight:400;color:#505050;font-family:'Liberation Sans', sans-serif;white-space:nowrap;transform:scaleX(1.0549);transform-origin:0 50%;">Layout da Página</span>
<span id="t4" style="position:absolute;left:342.5px;top:36.8px;height:13.8px;line-height:13.8px;font-size:10.6px;font-weight:400;color:#505050;font-family:'Liberation Sans', sans-serif;white-space:nowrap;transform:scaleX(1.0304);transform-origin:0 50%;">Fórmulas</span>
<span id="t5" style="position:absolute;left:414.5px;top:36.8px;height:13.8px;line-height:13.8px;font-size:10.6px;font-weight:400;color:#505050;font-family:'Liberation Sans', sans-serif;white-space:nowrap;transform:scaleX(1.0547);transform-origin:0 50%;">Dados</span>
<span id="t6" style="position:absolute;left:470.7px;top:36.8px;height:13.8px;line-height:13.8px;font-size:10.6px;font-weight:400;color:#505050;font-family:'Liberation Sans', sans-serif;white-space:nowrap;transform:scaleX(1.0266);transform-origin:0 50%;">Revisão</span>
<span id="t7" style="position:absolute;left:534.3px;top:36.8px;height:13.8px;line-height:13.8px;font-size:10.6px;font-weight:400;color:#505050;font-family:'Liberation Sans', sans-serif;white-space:nowrap;transform:scaleX(1.0566);transform-origin:0 50%;">Exibir</span>
<span id="t8" style="position:absolute;left:588.3px;top:36.8px;height:13.8px;line-height:13.8px;font-size:10.6px;font-weight:400;color:#505050;font-family:'Liberation Sans', sans-serif;white-space:nowrap;transform:scaleX(1.0914);transform-origin:0 50%;">Automatizar</span>
<span id="t9" style="position:absolute;left:676.7px;top:36.8px;height:13.8px;line-height:13.8px;font-size:10.6px;font-weight:400;color:#505050;font-family:'Liberation Sans', sans-serif;white-space:nowrap;transform:scaleX(1.0754);transform-origin:0 50%;">Desenvolvedor</span>
<span id="t10" style="position:absolute;left:779px;top:36.8px;height:13.8px;line-height:13.8px;font-size:10.6px;font-weight:400;color:#505050;font-family:'Liberation Sans', sans-serif;white-space:nowrap;transform:scaleX(1.0587);transform-origin:0 50%;">Ajuda</span>
<span id="t11" style="position:absolute;left:959px;top:36.2px;height:14.3px;line-height:14.3px;font-size:11px;font-weight:700;color:#2f6f4b;font-family:'Liberation Sans', sans-serif;white-space:nowrap;transform:scaleX(0.9814);transform-origin:0 50%;">Comentários</span>
<span id="t12" style="position:absolute;left:1063px;top:36.2px;height:14.3px;line-height:14.3px;font-size:11px;font-weight:700;color:#2f6f4b;font-family:'Liberation Sans', sans-serif;white-space:nowrap;transform:scaleX(1.0186);transform-origin:0 50%;">Compartilhamento</span>
<span id="t13" style="position:absolute;left:3px;top:127.1px;height:12.1px;line-height:12.1px;font-size:9.3px;font-weight:400;color:#3a3a3a;font-family:'Liberation Sans', sans-serif;white-space:nowrap;transform:scaleX(1.0384);transform-origin:0 50%;">Área de Transferência</span>
<span id="t14" style="position:absolute;left:197.5px;top:127.1px;height:12.1px;line-height:12.1px;font-size:9.3px;font-weight:400;color:#3a3a3a;font-family:'Liberation Sans', sans-serif;white-space:nowrap;transform:scaleX(1.0933);transform-origin:0 50%;">Fonte</span>
<span id="t15" style="position:absolute;left:362.5px;top:127.1px;height:12.1px;line-height:12.1px;font-size:9.3px;font-weight:400;color:#3a3a3a;font-family:'Liberation Sans', sans-serif;white-space:nowrap;transform:scaleX(1.1028);transform-origin:0 50%;">Alinhamento</span>
<span id="t16" style="position:absolute;left:520.5px;top:127.1px;height:12.1px;line-height:12.1px;font-size:9.3px;font-weight:400;color:#3a3a3a;font-family:'Liberation Sans', sans-serif;white-space:nowrap;transform:scaleX(1.0732);transform-origin:0 50%;">Número</span>
<span id="t17" style="position:absolute;left:703.7px;top:127.1px;height:12.1px;line-height:12.1px;font-size:9.3px;font-weight:400;color:#3a3a3a;font-family:'Liberation Sans', sans-serif;white-space:nowrap;transform:scaleX(1.0149);transform-origin:0 50%;">Estilos</span>
<span id="t18" style="position:absolute;left:850px;top:127.1px;height:12.1px;line-height:12.1px;font-size:9.3px;font-weight:400;color:#3a3a3a;font-family:'Liberation Sans', sans-serif;white-space:nowrap;transform:scaleX(1.0317);transform-origin:0 50%;">Células</span>
<span id="t19" style="position:absolute;left:977px;top:127.1px;height:12.1px;line-height:12.1px;font-size:9.3px;font-weight:400;color:#3a3a3a;font-family:'Liberation Sans', sans-serif;white-space:nowrap;transform:scaleX(1.0198);transform-origin:0 50%;">Edição</span>
<span id="t20" style="position:absolute;left:11px;top:153.8px;height:14.3px;line-height:14.3px;font-size:11px;font-weight:400;color:#555;font-family:'Liberation Sans', sans-serif;white-space:nowrap;transform:scaleX(0.8889);transform-origin:0 50%;">C5</span>
<span id="t21" style="position:absolute;left:229.6px;top:154.0px;height:15.0px;line-height:15.0px;font-size:11.5px;font-weight:400;color:#555;font-family:'Liberation Sans', sans-serif;white-space:nowrap;transform:scaleX(1.0693);transform-origin:0 50%;">Marketing</span>
<span id="t22" style="position:absolute;left:24.5px;top:181.8px;height:14.3px;line-height:14.3px;font-size:11px;font-weight:400;color:#333;font-family:'Liberation Sans', sans-serif;white-space:nowrap;">A</span>
<span id="t23" style="position:absolute;left:37.0px;top:181.8px;height:14.3px;line-height:14.3px;font-size:11px;font-weight:400;color:#333;font-family:'Liberation Sans', sans-serif;white-space:nowrap;">B</span>
<span id="t24" style="position:absolute;left:138.5px;top:181.8px;height:14.3px;line-height:14.3px;font-size:11px;font-weight:400;color:#2f5a40;font-family:'Liberation Sans', sans-serif;white-space:nowrap;">C</span>
<span id="t25" style="position:absolute;left:335.0px;top:181.8px;height:14.3px;line-height:14.3px;font-size:11px;font-weight:400;color:#333;font-family:'Liberation Sans', sans-serif;white-space:nowrap;">D</span>
<span id="t26" style="position:absolute;left:531.5px;top:181.8px;height:14.3px;line-height:14.3px;font-size:11px;font-weight:400;color:#333;font-family:'Liberation Sans', sans-serif;white-space:nowrap;">E</span>
<span id="t27" style="position:absolute;left:728.0px;top:181.8px;height:14.3px;line-height:14.3px;font-size:11px;font-weight:400;color:#333;font-family:'Liberation Sans', sans-serif;white-space:nowrap;">F</span>
<span id="t28" style="position:absolute;left:924.0px;top:181.8px;height:14.3px;line-height:14.3px;font-size:11px;font-weight:400;color:#333;font-family:'Liberation Sans', sans-serif;white-space:nowrap;">G</span>
<span id="t29" style="position:absolute;left:1055.75px;top:181.8px;height:14.3px;line-height:14.3px;font-size:11px;font-weight:400;color:#333;font-family:'Liberation Sans', sans-serif;white-space:nowrap;">H</span>
<span id="t30" style="position:absolute;left:1126.25px;top:181.8px;height:14.3px;line-height:14.3px;font-size:11px;font-weight:400;color:#333;font-family:'Liberation Sans', sans-serif;white-space:nowrap;">I</span>
<span id="t31" style="position:absolute;left:153.7px;top:205.8px;height:12.3px;line-height:12.3px;font-size:9.5px;font-weight:700;color:#f2f2f2;font-family:'Liberation Sans', sans-serif;white-space:nowrap;transform:scaleX(0.9702);transform-origin:0 50%;">PREMISSAS</span>
<span id="t32" style="position:absolute;left:164px;top:219.3px;height:12.3px;line-height:12.3px;font-size:9.5px;font-weight:700;color:#f2f2f2;font-family:'Liberation Sans', sans-serif;white-space:nowrap;transform:scaleX(0.9057);transform-origin:0 50%;">GERAIS</span>
<span id="t33" style="position:absolute;left:240px;top:212.3px;height:12.3px;line-height:12.3px;font-size:9.5px;font-weight:700;color:#f2f2f2;font-family:'Liberation Sans', sans-serif;white-space:nowrap;transform:scaleX(0.9843);transform-origin:0 50%;">CADASTRO</span>
<span id="t34" style="position:absolute;left:318.7px;top:205.8px;height:12.3px;line-height:12.3px;font-size:9.5px;font-weight:700;color:#f2f2f2;font-family:'Liberation Sans', sans-serif;white-space:nowrap;transform:scaleX(0.9763);transform-origin:0 50%;">CONTROLE DE</span>
<span id="t35" style="position:absolute;left:333px;top:219.3px;height:12.3px;line-height:12.3px;font-size:9.5px;font-weight:700;color:#f2f2f2;font-family:'Liberation Sans', sans-serif;white-space:nowrap;transform:scaleX(0.9850);transform-origin:0 50%;">VENDAS</span>
<span id="t36" style="position:absolute;left:408.7px;top:205.8px;height:12.3px;line-height:12.3px;font-size:9.5px;font-weight:700;color:#f2f2f2;font-family:'Liberation Sans', sans-serif;white-space:nowrap;transform:scaleX(0.9744);transform-origin:0 50%;">RELATÓRIOS</span>
<span id="t37" style="position:absolute;left:421px;top:219.3px;height:12.3px;line-height:12.3px;font-size:9.5px;font-weight:700;color:#f2f2f2;font-family:'Liberation Sans', sans-serif;white-space:nowrap;transform:scaleX(0.9605);transform-origin:0 50%;">GERAIS</span>
<span id="t38" style="position:absolute;left:494.5px;top:205.8px;height:12.3px;line-height:12.3px;font-size:9.5px;font-weight:700;color:#f2f2f2;font-family:'Liberation Sans', sans-serif;white-space:nowrap;transform:scaleX(0.9744);transform-origin:0 50%;">RELATÓRIOS</span>
<span id="t39" style="position:absolute;left:494.5px;top:219.3px;height:12.3px;line-height:12.3px;font-size:9.5px;font-weight:700;color:#f2f2f2;font-family:'Liberation Sans', sans-serif;white-space:nowrap;transform:scaleX(0.9472);transform-origin:0 50%;">ESPECÍFICOS</span>
<span id="t40" style="position:absolute;left:580px;top:212.3px;height:12.3px;line-height:12.3px;font-size:9.5px;font-weight:700;color:#f2f2f2;font-family:'Liberation Sans', sans-serif;white-space:nowrap;transform:scaleX(0.9879);transform-origin:0 50%;">DASHBOARD</span>
<span id="t41" style="position:absolute;left:666px;top:212.3px;height:12.3px;line-height:12.3px;font-size:9.5px;font-weight:700;color:#f2f2f2;font-family:'Liberation Sans', sans-serif;white-space:nowrap;transform:scaleX(0.9792);transform-origin:0 50%;">INSTRUÇÕES</span>
<span id="t42" style="position:absolute;left:127.5px;top:253.0px;height:12.3px;line-height:12.3px;font-size:9.5px;font-weight:700;color:#e8eff7;font-family:'Liberation Sans', sans-serif;white-space:nowrap;transform:scaleX(0.9881);transform-origin:0 50%;">DADOS GERAIS</span>
<span id="t43" style="position:absolute;left:226px;top:253.0px;height:12.3px;line-height:12.3px;font-size:9.5px;font-weight:700;color:#3a3a3a;font-family:'Liberation Sans', sans-serif;white-space:nowrap;transform:scaleX(0.9807);transform-origin:0 50%;">SEGMENTAÇÃO DE CLIENTES</span>
<span id="t44" style="position:absolute;left:385px;top:253.0px;height:12.3px;line-height:12.3px;font-size:9.5px;font-weight:700;color:#e8eff7;font-family:'Liberation Sans', sans-serif;white-space:nowrap;transform:scaleX(0.9459);transform-origin:0 50%;">PERFIL DE CLIENTES</span>
<span id="t45" style="position:absolute;left:512.5px;top:253.0px;height:12.3px;line-height:12.3px;font-size:9.5px;font-weight:700;color:#e8eff7;font-family:'Liberation Sans', sans-serif;white-space:nowrap;transform:scaleX(0.9940);transform-origin:0 50%;">INDICAÇÕES</span>
<span id="t46" style="position:absolute;left:606px;top:253.0px;height:12.3px;line-height:12.3px;font-size:9.5px;font-weight:700;color:#e8eff7;font-family:'Liberation Sans', sans-serif;white-space:nowrap;transform:scaleX(0.9767);transform-origin:0 50%;">LOCALIZAÇÃO GEOGRÁFICA</span>
<span id="t47" style="position:absolute;left:56px;top:293.9px;height:14.3px;line-height:14.3px;font-size:11px;font-weight:700;color:#505050;font-family:'Liberation Sans', sans-serif;white-space:nowrap;transform:scaleX(0.9213);transform-origin:0 50%;">Área de interesse</span>
<span id="t48" style="position:absolute;left:252.7px;top:293.9px;height:14.3px;line-height:14.3px;font-size:11px;font-weight:700;color:#505050;font-family:'Liberation Sans', sans-serif;white-space:nowrap;transform:scaleX(0.8393);transform-origin:0 50%;">Localização geográfica</span>
<span id="t49" style="position:absolute;left:449.3px;top:293.9px;height:14.3px;line-height:14.3px;font-size:11px;font-weight:700;color:#505050;font-family:'Liberation Sans', sans-serif;white-space:nowrap;transform:scaleX(0.8991);transform-origin:0 50%;">Ramo de atividade</span>
<span id="t50" style="position:absolute;left:645.7px;top:293.9px;height:14.3px;line-height:14.3px;font-size:11px;font-weight:700;color:#505050;font-family:'Liberation Sans', sans-serif;white-space:nowrap;transform:scaleX(0.9048);transform-origin:0 50%;">Idade</span>
<span id="t51" style="position:absolute;left:842.7px;top:293.9px;height:14.3px;line-height:14.3px;font-size:11px;font-weight:700;color:#505050;font-family:'Liberation Sans', sans-serif;white-space:nowrap;">N/A</span>
<span id="t52" style="position:absolute;left:55.699999999999996px;top:325.9px;height:14.3px;line-height:14.3px;font-size:11px;font-weight:400;color:#333;font-family:'Liberation Sans', sans-serif;white-space:nowrap;transform:scaleX(1.0291);transform-origin:0 50%;">Marketing</span>
<span id="t53" style="position:absolute;left:55.699999999999996px;top:357.4px;height:14.3px;line-height:14.3px;font-size:11px;font-weight:400;color:#333;font-family:'Liberation Sans', sans-serif;white-space:nowrap;transform:scaleX(1.0328);transform-origin:0 50%;">Varejo</span>
<span id="t54" style="position:absolute;left:55.699999999999996px;top:388.9px;height:14.3px;line-height:14.3px;font-size:11px;font-weight:400;color:#333;font-family:'Liberation Sans', sans-serif;white-space:nowrap;transform:scaleX(0.9783);transform-origin:0 50%;">Atacado</span>
<span id="t55" style="position:absolute;left:55.699999999999996px;top:420.4px;height:14.3px;line-height:14.3px;font-size:11px;font-weight:400;color:#333;font-family:'Liberation Sans', sans-serif;white-space:nowrap;transform:scaleX(0.9925);transform-origin:0 50%;">Tecnologia</span>
<span id="t56" style="position:absolute;left:251.9px;top:325.9px;height:14.3px;line-height:14.3px;font-size:11px;font-weight:400;color:#333;font-family:'Liberation Sans', sans-serif;white-space:nowrap;transform:scaleX(0.9367);transform-origin:0 50%;">Sul</span>
<span id="t57" style="position:absolute;left:251.9px;top:357.4px;height:14.3px;line-height:14.3px;font-size:11px;font-weight:400;color:#333;font-family:'Liberation Sans', sans-serif;white-space:nowrap;transform:scaleX(0.9238);transform-origin:0 50%;">Sudeste</span>
<span id="t58" style="position:absolute;left:251.9px;top:388.9px;height:14.3px;line-height:14.3px;font-size:11px;font-weight:400;color:#333;font-family:'Liberation Sans', sans-serif;white-space:nowrap;">Norte</span>
<span id="t59" style="position:absolute;left:251.9px;top:420.4px;height:14.3px;line-height:14.3px;font-size:11px;font-weight:400;color:#333;font-family:'Liberation Sans', sans-serif;white-space:nowrap;transform:scaleX(0.9767);transform-origin:0 50%;">Nordeste</span>
<span id="t60" style="position:absolute;left:251.9px;top:451.9px;height:14.3px;line-height:14.3px;font-size:11px;font-weight:400;color:#333;font-family:'Liberation Sans', sans-serif;white-space:nowrap;transform:scaleX(0.9511);transform-origin:0 50%;">Centro-Oeste</span>
<span id="t61" style="position:absolute;left:448.4px;top:325.9px;height:14.3px;line-height:14.3px;font-size:11px;font-weight:400;color:#333;font-family:'Liberation Sans', sans-serif;white-space:nowrap;transform:scaleX(0.9571);transform-origin:0 50%;">e-commerce</span>
<span id="t62" style="position:absolute;left:448.4px;top:357.4px;height:14.3px;line-height:14.3px;font-size:11px;font-weight:400;color:#333;font-family:'Liberation Sans', sans-serif;white-space:nowrap;transform:scaleX(1.0245);transform-origin:0 50%;">Vestuário</span>
<span id="t63" style="position:absolute;left:448.4px;top:388.9px;height:14.3px;line-height:14.3px;font-size:11px;font-weight:400;color:#333;font-family:'Liberation Sans', sans-serif;white-space:nowrap;transform:scaleX(1.0492);transform-origin:0 50%;">Informática</span>
<span id="t64" style="position:absolute;left:645.0px;top:325.9px;height:14.3px;line-height:14.3px;font-size:11px;font-weight:400;color:#333;font-family:'Liberation Sans', sans-serif;white-space:nowrap;transform:scaleX(0.9729);transform-origin:0 50%;">18 a 21 anos</span>
<span id="t65" style="position:absolute;left:645.0px;top:357.4px;height:14.3px;line-height:14.3px;font-size:11px;font-weight:400;color:#333;font-family:'Liberation Sans', sans-serif;white-space:nowrap;transform:scaleX(0.9760);transform-origin:0 50%;">22 a 30 anos</span>
<span id="t66" style="position:absolute;left:645.0px;top:388.9px;height:14.3px;line-height:14.3px;font-size:11px;font-weight:400;color:#333;font-family:'Liberation Sans', sans-serif;white-space:nowrap;transform:scaleX(0.9760);transform-origin:0 50%;">31 a 40 anos</span>
<span id="t67" style="position:absolute;left:645.0px;top:420.4px;height:14.3px;line-height:14.3px;font-size:11px;font-weight:400;color:#333;font-family:'Liberation Sans', sans-serif;white-space:nowrap;transform:scaleX(0.9760);transform-origin:0 50%;">41 a 50 anos</span>
<span id="t68" style="position:absolute;left:645.0px;top:451.9px;height:14.3px;line-height:14.3px;font-size:11px;font-weight:400;color:#333;font-family:'Liberation Sans', sans-serif;white-space:nowrap;transform:scaleX(0.9760);transform-origin:0 50%;">51 a 60 anos</span>
<span id="t69" style="position:absolute;left:645.0px;top:483.4px;height:14.3px;line-height:14.3px;font-size:11px;font-weight:400;color:#333;font-family:'Liberation Sans', sans-serif;white-space:nowrap;transform:scaleX(0.9861);transform-origin:0 50%;">Mais de 60 anos</span>
<span id="t70" style="position:absolute;left:6.5px;top:620.1px;height:14.3px;line-height:14.3px;font-size:11px;font-weight:400;color:#444;font-family:'Liberation Sans', sans-serif;white-space:nowrap;transform:scaleX(0.9253);transform-origin:0 50%;">Pronto</span>
<span id="t71" style="position:absolute;left:98px;top:619.9px;height:14.3px;line-height:14.3px;font-size:11px;font-weight:400;color:#444;font-family:'Liberation Sans', sans-serif;white-space:nowrap;transform:scaleX(0.9068);transform-origin:0 50%;">Acessibilidade: investigar</span>
<span id="t72" style="position:absolute;left:1167.5px;top:620.1px;height:14.3px;line-height:14.3px;font-size:11px;font-weight:400;color:#555;font-family:'Liberation Sans', sans-serif;white-space:nowrap;transform:scaleX(0.8397);transform-origin:0 50%;">90%</span>
<span id="t73" style="position:absolute;left:29.5px;top:91.8px;height:13.0px;line-height:13.0px;font-size:10px;font-weight:400;color:#444;font-family:'Liberation Sans', sans-serif;white-space:nowrap;transform:scaleX(0.9830);transform-origin:0 50%;">Colar</span>
<span id="t74" style="position:absolute;left:125.8px;top:69.0px;height:15.0px;line-height:15.0px;font-size:11.5px;font-weight:400;color:#444;font-family:'Liberation Sans', sans-serif;white-space:nowrap;transform:scaleX(0.9112);transform-origin:0 50%;">Calibri</span>
<span id="t75" style="position:absolute;left:236px;top:69.0px;height:15.0px;line-height:15.0px;font-size:11.5px;font-weight:400;color:#444;font-family:'Liberation Sans', sans-serif;white-space:nowrap;transform:scaleX(0.7278);transform-origin:0 50%;">11</span>
<span id="t76" style="position:absolute;left:128px;top:95.8px;height:15.0px;line-height:15.0px;font-size:11.5px;font-weight:700;color:#a0a0a0;font-family:'Liberation Sans', sans-serif;white-space:nowrap;">N</span>
<span id="t77" style="position:absolute;left:151px;top:95.7px;height:15.6px;line-height:15.6px;font-size:12px;font-weight:400;color:#a0a0a0;font-family:'Liberation Serif', serif;white-space:nowrap;font-style:italic;">I</span>
<span id="t78" style="position:absolute;left:171.3px;top:96.1px;height:14.3px;line-height:14.3px;font-size:11px;font-weight:400;color:#a0a0a0;font-family:'Liberation Sans', sans-serif;white-space:nowrap;transform:scaleX(0.8443);transform-origin:0 50%;">S</span>
<span id="t79" style="position:absolute;left:521.5px;top:94.9px;height:18.2px;line-height:18.2px;font-size:14px;font-weight:400;color:#a0a0a0;font-family:'Liberation Sans', sans-serif;white-space:nowrap;transform:scaleX(1.0680);transform-origin:0 50%;">%</span>
<span id="t80" style="position:absolute;left:542.4px;top:98.2px;height:11.7px;line-height:11.7px;font-size:9px;font-weight:400;color:#b3b3b3;font-family:'Liberation Sans', sans-serif;white-space:nowrap;transform:scaleX(0.9048);transform-origin:0 50%;">000</span>
<span id="t81" style="position:absolute;left:628.7px;top:91.8px;height:13.0px;line-height:13.0px;font-size:10px;font-weight:400;color:#a6a6a6;font-family:'Liberation Sans', sans-serif;white-space:nowrap;transform:scaleX(1.0158);transform-origin:0 50%;">Formatação</span>
<span id="t82" style="position:absolute;left:623.4px;top:105.5px;height:13.0px;line-height:13.0px;font-size:10px;font-weight:400;color:#a6a6a6;font-family:'Liberation Sans', sans-serif;white-space:nowrap;transform:scaleX(1.0523);transform-origin:0 50%;">Condicional</span>
<span id="t83" style="position:absolute;left:692.9px;top:91.8px;height:13.0px;line-height:13.0px;font-size:10px;font-weight:400;color:#a6a6a6;font-family:'Liberation Sans', sans-serif;white-space:nowrap;transform:scaleX(1.0458);transform-origin:0 50%;">Formatar como</span>
<span id="t84" style="position:absolute;left:710.4px;top:105.5px;height:13.0px;line-height:13.0px;font-size:10px;font-weight:400;color:#a6a6a6;font-family:'Liberation Sans', sans-serif;white-space:nowrap;transform:scaleX(0.9502);transform-origin:0 50%;">Tabela</span>
<span id="t85" style="position:absolute;left:769px;top:91.8px;height:13.0px;line-height:13.0px;font-size:10px;font-weight:400;color:#a6a6a6;font-family:'Liberation Sans', sans-serif;white-space:nowrap;transform:scaleX(0.9779);transform-origin:0 50%;">Estilos de</span>
<span id="t86" style="position:absolute;left:771.6px;top:105.5px;height:13.0px;line-height:13.0px;font-size:10px;font-weight:400;color:#a6a6a6;font-family:'Liberation Sans', sans-serif;white-space:nowrap;">Célula</span>
<span id="t87" style="position:absolute;left:847.8px;top:61.9px;height:13.0px;line-height:13.0px;font-size:10px;font-weight:400;color:#a6a6a6;font-family:'Liberation Sans', sans-serif;white-space:nowrap;transform:scaleX(0.9785);transform-origin:0 50%;">Inserir</span>
<span id="t88" style="position:absolute;left:847.8px;top:81.9px;height:13.0px;line-height:13.0px;font-size:10px;font-weight:400;color:#a6a6a6;font-family:'Liberation Sans', sans-serif;white-space:nowrap;transform:scaleX(0.9895);transform-origin:0 50%;">Excluir</span>
<span id="t89" style="position:absolute;left:847.8px;top:101.9px;height:13.0px;line-height:13.0px;font-size:10px;font-weight:400;color:#262626;font-family:'Liberation Sans', sans-serif;white-space:nowrap;transform:scaleX(1.0157);transform-origin:0 50%;">Formatar</span>
<span id="t90" style="position:absolute;left:954.4px;top:91.8px;height:13.0px;line-height:13.0px;font-size:10px;font-weight:400;color:#444;font-family:'Liberation Sans', sans-serif;white-space:nowrap;transform:scaleX(0.9886);transform-origin:0 50%;">Classificar</span>
<span id="t91" style="position:absolute;left:956px;top:105.5px;height:13.0px;line-height:13.0px;font-size:10px;font-weight:400;color:#444;font-family:'Liberation Sans', sans-serif;white-space:nowrap;transform:scaleX(0.9880);transform-origin:0 50%;">e Filtrar</span>
<span id="t92" style="position:absolute;left:1009px;top:91.8px;height:13.0px;line-height:13.0px;font-size:10px;font-weight:400;color:#444;font-family:'Liberation Sans', sans-serif;white-space:nowrap;transform:scaleX(0.9926);transform-origin:0 50%;">Localizar e</span>
<span id="t93" style="position:absolute;left:1004.8px;top:105.5px;height:13.0px;line-height:13.0px;font-size:10px;font-weight:400;color:#444;font-family:'Liberation Sans', sans-serif;white-space:nowrap;transform:scaleX(0.9880);transform-origin:0 50%;">Selecionar</span>
<span id="t94" style="position:absolute;left:194.5px;top:151.2px;height:17.6px;line-height:17.6px;font-size:13.5px;font-weight:400;color:#555;font-family:'Liberation Serif', serif;white-space:nowrap;transform:scaleX(1.2877);transform-origin:0 50%;"><i>f</i><span style='font-size:9px;position:relative;top:1px'><i>x</i></span></span>
</div></body></html>
